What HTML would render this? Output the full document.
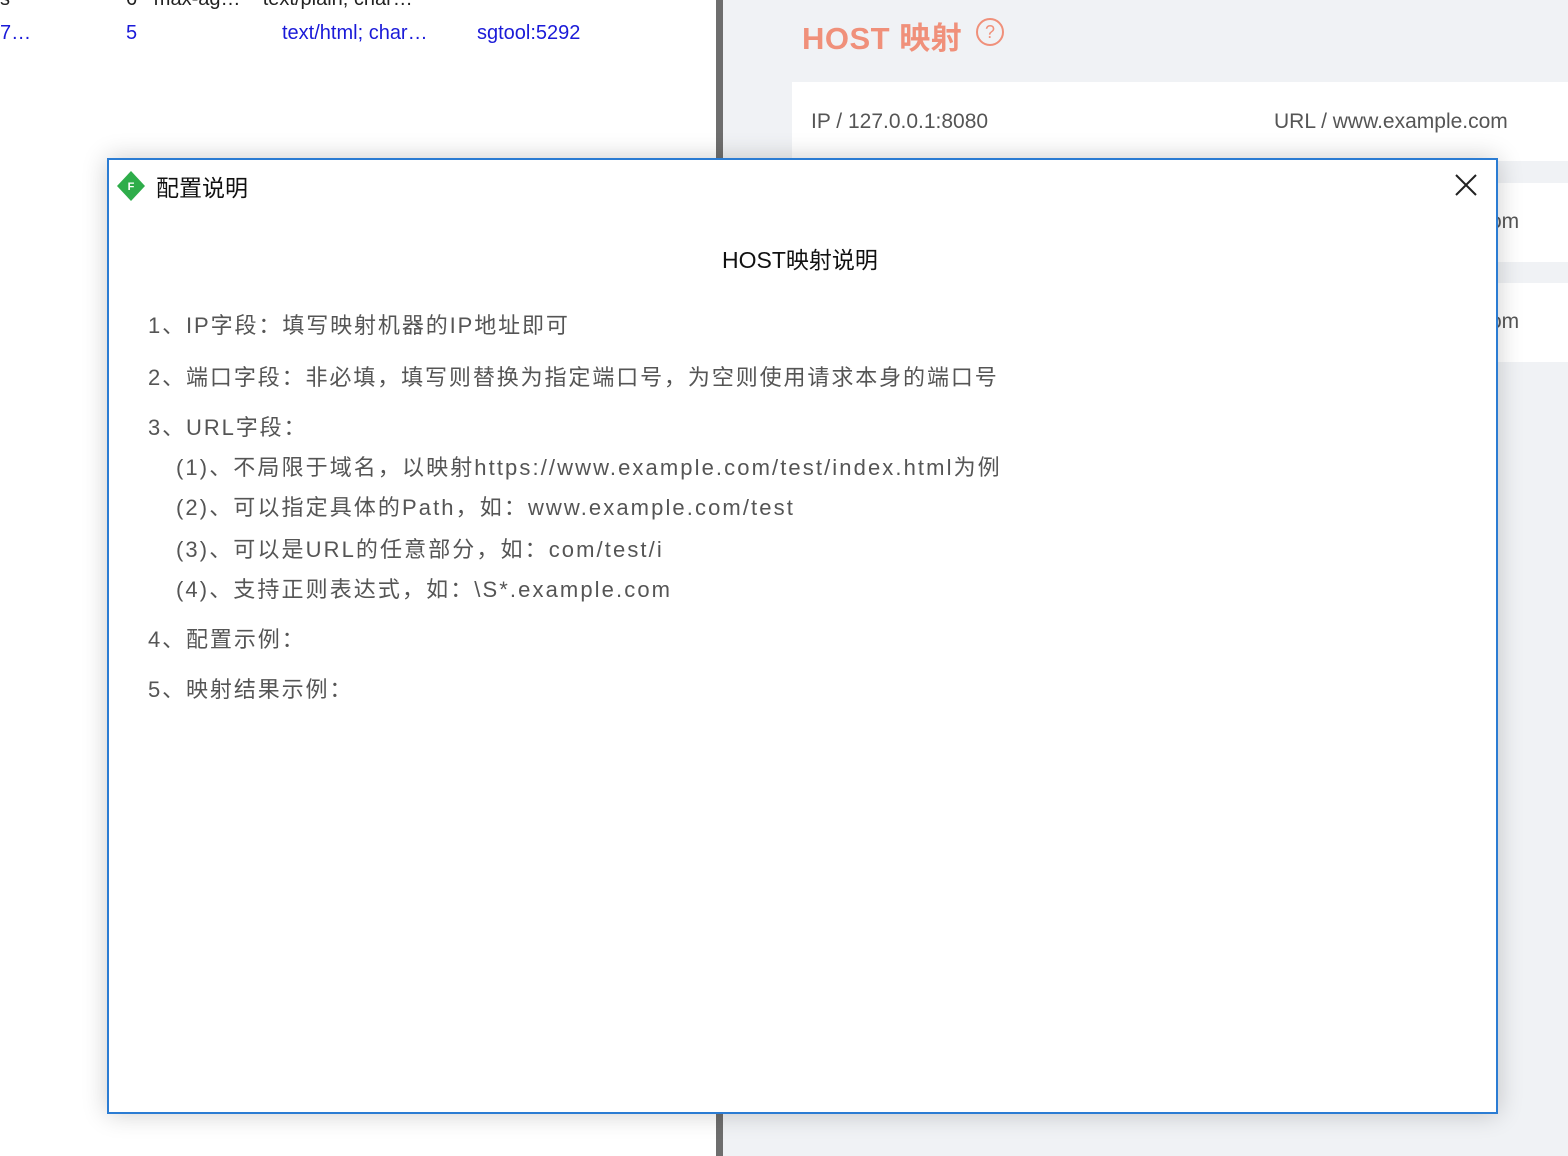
<!DOCTYPE html>
<html><head><meta charset="utf-8"><style>
*{margin:0;padding:0;box-sizing:border-box}
body{width:1568px;height:1156px;position:relative;overflow:hidden;background:#fff;font-family:"Liberation Sans","Noto Sans CJK SC",sans-serif}
.abs{position:absolute;white-space:nowrap}
#left{left:0;top:0;width:716px;height:1156px;background:#fff}
#div{left:716px;top:0;width:7px;height:1156px;background:#6e6e6e}
#right{left:723px;top:0;width:845px;height:1156px;background:#f0f2f5}
.card{position:absolute;left:792px;width:776px;height:79px;background:#fff}
.blue{color:#1a1ad8;font-size:20px}
#dlg{left:107px;top:158px;width:1391px;height:956px;background:#fff;border:2px solid #2b7cd3;box-shadow:0 0 24px rgba(0,0,0,.2)}
.ln{position:absolute;font-size:22px;color:#555;letter-spacing:1.9px;white-space:nowrap;line-height:30px}
</style></head><body>
<div id="left" class="abs"></div>
<div class="abs blue" style="left:0;top:-12px;color:#222">s</div>
<div class="abs" style="left:126px;top:-12px;font-size:20px;color:#222">6&nbsp;&nbsp;&nbsp;max-ag…&nbsp;&nbsp;&nbsp;&nbsp;text/plain; char…</div>
<div class="abs blue" style="left:0;top:22px">7…</div>
<div class="abs blue" style="left:126px;top:22px">5</div>
<div class="abs blue" style="left:282px;top:22px">text/html; char…</div>
<div class="abs blue" style="left:477px;top:22px">sgtool:5292</div>
<div id="div" class="abs"></div>
<div id="right" class="abs"></div>
<div class="abs" style="left:802px;top:13px;font-size:31px;font-weight:bold;color:#f0907a;letter-spacing:0.5px">HOST 映射</div>
<div class="abs" style="left:976px;top:18px;width:28px;height:28px;border:2px solid #f0907a;border-radius:50%;color:#f0907a;font-size:18px;text-align:center;line-height:24px">?</div>
<div class="card" style="top:82px"></div>
<div class="card" style="top:183px"></div>
<div class="card" style="top:283px"></div>
<div class="abs" style="left:811px;top:110px;font-size:21px;color:#555">IP / 127.0.0.1:8080</div>
<div class="abs" style="left:1274px;top:110px;font-size:21px;color:#555">URL / www.example.com</div>
<div class="abs" style="left:1490px;top:210px;font-size:21px;color:#555">om</div>
<div class="abs" style="left:1490px;top:310px;font-size:21px;color:#555">om</div>
<div id="dlg" class="abs">
<svg style="position:absolute;left:6px;top:10px" width="32" height="32" viewBox="0 0 32 32"><path d="M16 1 L30 16 L16 31 L2 16Z" fill="#2ead4a"/><text x="16" y="20" font-size="11" fill="#fff" text-anchor="middle" font-family="Liberation Sans" font-weight="bold">F</text></svg>
<div class="abs" style="left:47px;top:9px;font-size:23px;color:#111">配置说明</div>
<svg style="position:absolute;left:1346px;top:14px" width="22" height="22" viewBox="0 0 22 22"><path d="M1 1L21 21M21 1L1 21" stroke="#222" stroke-width="2"/></svg>
<div class="abs" style="left:613px;top:81px;font-size:23px;color:#111">HOST映射说明</div>
<div class="ln" style="left:39px;top:151px">1、IP字段：填写映射机器的IP地址即可</div>
<div class="ln" style="left:39px;top:203px">2、端口字段：非必填，填写则替换为指定端口号，为空则使用请求本身的端口号</div>
<div class="ln" style="left:39px;top:253px">3、URL字段：</div>
<div class="ln" style="left:67px;top:293px;letter-spacing:2.1px">(1)、不局限于域名，以映射https://www.example.com/test/index.html为例</div>
<div class="ln" style="left:67px;top:333px;letter-spacing:2.1px">(2)、可以指定具体的Path，如：www.example.com/test</div>
<div class="ln" style="left:67px;top:375px;letter-spacing:2.1px">(3)、可以是URL的任意部分，如：com/test/i</div>
<div class="ln" style="left:67px;top:415px;letter-spacing:2.1px">(4)、支持正则表达式，如：\S*.example.com</div>
<div class="ln" style="left:39px;top:465px">4、配置示例：</div>
<div class="ln" style="left:39px;top:515px">5、映射结果示例：</div>
</div>
</body></html>
